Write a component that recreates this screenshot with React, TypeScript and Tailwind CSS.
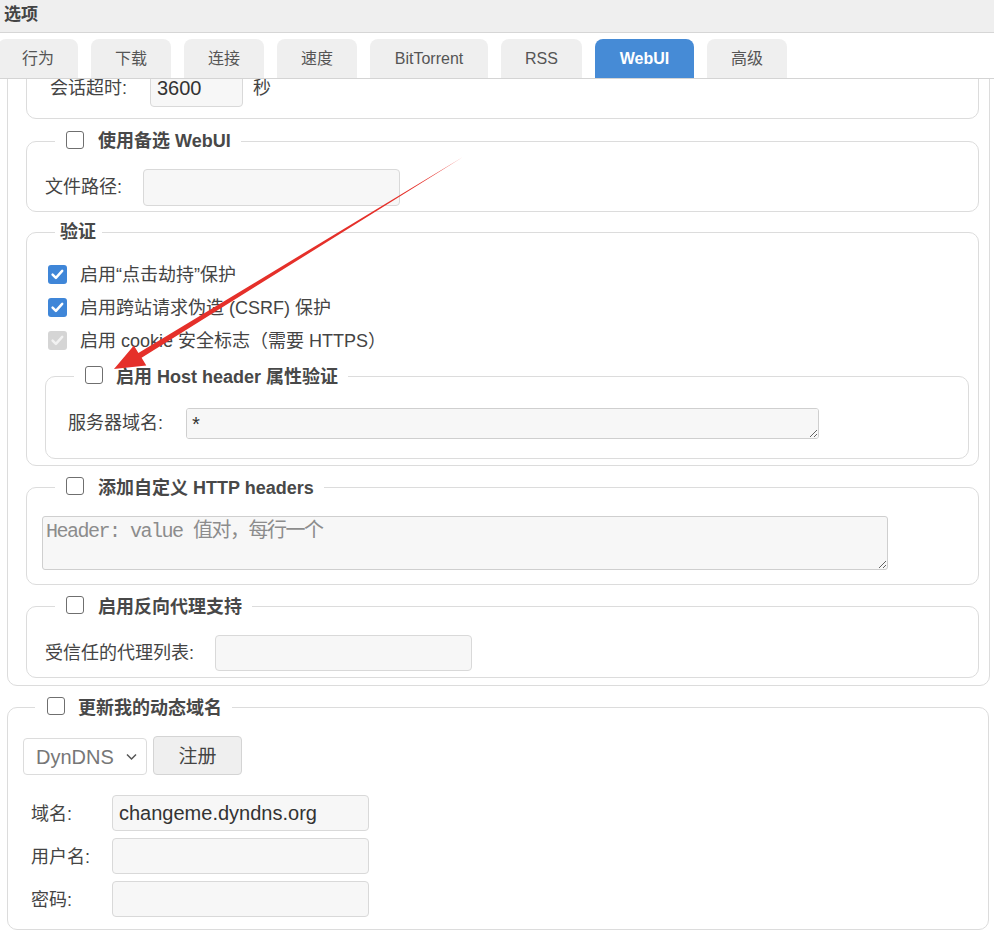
import React from "react";

type BoxState = "off" | "on" | "dis";

function Box({ state }: { state: BoxState }) {
  if (state === "off") {
    return (
      <span className="inline-block w-[18px] h-[18px] shrink-0 rounded-[3px] border-[1.5px] border-[#6f6f6f] bg-white -mt-[3px]" />
    );
  }
  const bg = state === "on" ? "bg-[#3f86d8]" : "bg-[#d5d5d5]";
  const stroke = state === "on" ? "#ffffff" : "#f2f2f2";
  return (
    <span className={`inline-flex w-[19px] h-[19px] shrink-0 items-center justify-center rounded-[3px] ${bg}`}>
      <svg width="19" height="19" viewBox="0 0 19 19">
        <path d="M4.6 9.6 L7.9 12.8 L14.2 5.9" fill="none" stroke={stroke} strokeWidth="2.5" strokeLinecap="round" strokeLinejoin="round" />
      </svg>
    </span>
  );
}

const inputCls =
  "h-[36px] rounded-[4px] border border-[#d9d9d9] bg-[#f7f7f7] px-[6px] text-[20px] text-[#333] outline-none";

const tabs: { t: string; w: string }[] = [
  { t: "行为", w: "w-[80px]" },
  { t: "下载", w: "w-[80px]" },
  { t: "连接", w: "w-[80px]" },
  { t: "速度", w: "w-[80px]" },
  { t: "BitTorrent", w: "w-[118px]" },
  { t: "RSS", w: "w-[81px]" },
  { t: "WebUI", w: "w-[99px]" },
  { t: "高级", w: "w-[80px]" },
];

export default function App() {
  return (
    <div className="relative w-[994px] h-[934px] overflow-hidden bg-white font-['Liberation_Sans','Noto_Sans_CJK_SC',sans-serif] text-[#444]">
      {/* title bar */}
      <div className="h-[33px] bg-[#efefef] border-b border-[#d6d6d6] pl-[4px] flex items-center">
        <span className="text-[17px] font-bold text-[#444] -mt-[3px]">选项</span>
      </div>

      {/* tab strip */}
      <div className="h-[46px] pt-[6px] border-b border-[#d4d4d4] flex gap-[13px] -ml-[2px]">
        {tabs.map(({ t, w }) =>
          t === "WebUI" ? (
            <div key={t} className={`${w} h-[39px] rounded-t-[8px] bg-[#468bd6] text-white font-bold text-[16px] flex items-center justify-center`}>
              {t}
            </div>
          ) : (
            <div key={t} className={`${w} h-[39px] rounded-t-[8px] bg-[#efefef] text-[#555] text-[16px] flex items-center justify-center`}>
              {t}
            </div>
          )
        )}
      </div>

      {/* scrolled content */}
      <div className="h-[855px] overflow-hidden pl-[7px] pr-[4px]">
        <div className="-mt-[30px]">
          {/* big outer group */}
          <div className="border border-[#dcdcdc] rounded-[10px] pt-[10px] pl-[18px] pr-[10px] pb-[7px]">
            {/* session timeout */}
            <div className="border border-[#dcdcdc] rounded-[10px] pt-[9px] pb-[11px] pl-[23px] flex items-center text-[18px]">
              <span className="w-[100px]">会话超时:</span>
              <input defaultValue="3600" className={`${inputCls} w-[93px] h-[37px]`} />
              <span className="ml-[10px]">秒</span>
            </div>

            {/* alternative webui */}
            <fieldset className="mt-[10px] border border-[#dcdcdc] rounded-[10px] pl-[18px] pr-[10px] pt-[15px] pb-[5px]">
              <legend className="ml-[10px] pl-[11px] pr-[10px]">
                <div className="h-[25px] flex items-center">
                  <Box state="off" />
                  <span className="ml-[14px] font-bold text-[18px] text-[#484848]">使用备选 WebUI</span>
                </div>
              </legend>
              <div className="flex items-center text-[18px]">
                <span className="w-[98px]">文件路径:</span>
                <input className={`${inputCls} w-[257px] h-[37px]`} />
              </div>
            </fieldset>

            {/* authentication */}
            <fieldset className="mt-[10px] border border-[#dcdcdc] rounded-[10px] pl-[18px] pr-[9px] pt-[15px] pb-[6px]">
              <legend className="ml-[10px] pl-[5px] pr-[6px]">
                <div className="h-[21px] flex items-center font-bold text-[18px] text-[#484848]">验证</div>
              </legend>
              <div className="text-[18px]">
                <div className="h-[33px] flex items-center pl-[3px]">
                  <Box state="on" />
                  <span className="ml-[13px] mt-[2px]">启用“点击劫持”保护</span>
                </div>
                <div className="h-[33px] flex items-center pl-[3px]">
                  <Box state="on" />
                  <span className="ml-[13px] mt-[2px]">启用跨站请求伪造 (CSRF) 保护</span>
                </div>
                <div className="h-[33px] flex items-center pl-[3px]">
                  <Box state="dis" />
                  <span className="ml-[13px] mt-[2px]">启用 cookie 安全标志（需要 HTTPS）</span>
                </div>
              </div>

              <fieldset className="mt-[7px] border border-[#dcdcdc] rounded-[10px] pl-[22px] pr-[10px] pt-[19px] pb-[19px]">
                <legend className="ml-[6px] pl-[11px] pr-[10px]">
                  <div className="h-[25px] flex items-center">
                    <Box state="off" />
                    <span className="ml-[13px] mt-[2px] font-bold text-[18px] text-[#484848]">启用 Host header 属性验证</span>
                  </div>
                </legend>
                <div className="flex items-center text-[18px]">
                  <span className="w-[118px]">服务器域名:</span>
                  <textarea
                    defaultValue="*"
                    className="w-[633px] h-[31px] rounded-[3px] border border-[#cfcfcf] bg-[#f7f7f7] pl-[3px] pt-[5px] pb-0 text-[20px] leading-[26px] text-[#333] font-['Liberation_Mono','Noto_Sans_CJK_SC',monospace] outline-none block"
                  />
                </div>
              </fieldset>
            </fieldset>

            {/* custom headers */}
            <fieldset className="mt-[9px] border border-[#dcdcdc] rounded-[10px] pl-[15px] pr-[10px] pt-[16px] pb-[14px]">
              <legend className="ml-[13px] pl-[11px] pr-[10px]">
                <div className="h-[25px] flex items-center">
                  <Box state="off" />
                  <span className="ml-[14px] mt-[2px] font-bold text-[18px] text-[#484848]">添加自定义 HTTP headers</span>
                </div>
              </legend>
              <textarea
                placeholder="Header: value 值对，每行一个"
                className="block w-[846px] h-[54px] rounded-[3px] border border-[#cfcfcf] bg-[#f7f7f7] px-[3px] pt-[2px] text-[20px] leading-[26px] tracking-[-1.5px] text-[#333] placeholder:text-[#8c8c8c] font-['Liberation_Mono','Noto_Sans_CJK_SC',monospace] outline-none"
              />
            </fieldset>

            {/* reverse proxy */}
            <fieldset className="mt-[9px] border border-[#dcdcdc] rounded-[10px] pl-[18px] pr-[10px] pt-[16px] pb-[6px]">
              <legend className="ml-[10px] pl-[11px] pr-[10px]">
                <div className="h-[25px] flex items-center">
                  <Box state="off" />
                  <span className="ml-[14px] mt-[2px] font-bold text-[18px] text-[#484848]">启用反向代理支持</span>
                </div>
              </legend>
              <div className="flex items-center text-[18px]">
                <span className="w-[170px]">受信任的代理列表:</span>
                <input className={`${inputCls} w-[257px]`} />
              </div>
            </fieldset>
          </div>

          {/* dynamic dns */}
          <fieldset className="mt-[9px] mr-[1px] border border-[#dcdcdc] rounded-[10px] pl-[15px] pr-[10px] pt-[16px] pb-[12px]">
            <legend className="ml-[12px] pl-[12px] pr-[10px]">
              <div className="h-[25px] flex items-center">
                <Box state="off" />
                <span className="ml-[13px] mt-[2px] font-bold text-[18px] text-[#484848]">更新我的动态域名</span>
              </div>
            </legend>
            <div className="flex items-end gap-[6px]">
              <div className="relative w-[124px] h-[37px]">
                <select
                  disabled
                  className="appearance-none w-full h-full rounded-[4px] border border-[#dcdcdc] bg-white pl-[12px] text-[20px] text-[#777]"
                >
                  <option>DynDNS</option>
                </select>
                <svg className="absolute right-[10px] top-[15px] pointer-events-none" width="11" height="8" viewBox="0 0 11 8">
                  <path d="M1 1.5 L5.5 6 L10 1.5" fill="none" stroke="#555" strokeWidth="1.5" />
                </svg>
              </div>
              <button className="w-[89px] h-[39px] rounded-[4px] border border-[#d4d4d4] bg-[#efefef] pt-[3px] text-[19px] text-[#444]">
                注册
              </button>
            </div>
            <div className="mt-[20px] flex flex-col gap-[7px] text-[18px] pl-[8px]">
              <div className="flex items-center">
                <span className="w-[81px] mt-[2px]">域名:</span>
                <input defaultValue="changeme.dyndns.org" className={`${inputCls} w-[257px]`} />
              </div>
              <div className="flex items-center">
                <span className="w-[81px] mt-[2px]">用户名:</span>
                <input className={`${inputCls} w-[257px]`} />
              </div>
              <div className="flex items-center">
                <span className="w-[81px] mt-[2px]">密码:</span>
                <input type="password" className={`${inputCls} w-[257px]`} />
              </div>
            </div>
          </fieldset>
        </div>
      </div>

      {/* red annotation arrow */}
      <svg className="absolute left-0 top-0 pointer-events-none" width="994" height="934" viewBox="0 0 994 934">
        <polygon
          points="463,157 141.6,357.8 146.3,365.6 114,369 133.9,345.6 138.4,352.9"
          fill="#e5302a"
        />
      </svg>
    </div>
  );
}
